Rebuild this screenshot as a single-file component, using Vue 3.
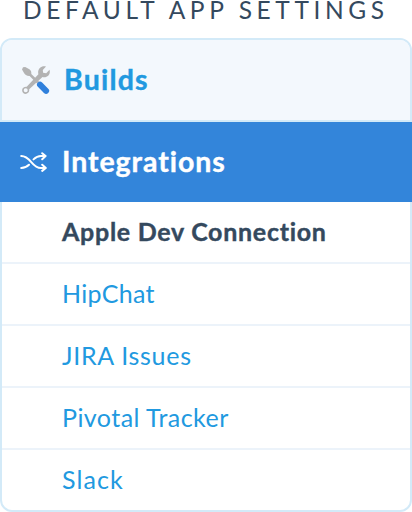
<script setup>
const items = [
  { label: 'Apple Dev Connection', name: 'apple', active: true },
  { label: 'HipChat', name: 'hipchat' },
  { label: 'JIRA Issues', name: 'jira' },
  { label: 'Pivotal Tracker', name: 'pivotal' },
  { label: 'Slack', name: 'slack' },
]
</script>

<template>
  <main class="settings">
    <h1 class="title">DEFAULT APP SETTINGS</h1>
    <nav class="card">
      <a class="section builds">
        <svg class="tools" viewBox="0 0 28 28" width="28" height="28">
          <path class="metal" d="M1 1.2 L3.2 1 L7.4 3.2 C9 4.4 9.6 6 9.3 8 L17 15.5 L15 17.5 L7.6 10 C5 10.2 2.8 8.6 1.9 6.7 L0 3.4Z" />
          <path class="metal" fill-rule="evenodd" d="M24 .6 L20.8 4 L21.1 6.8 L24.2 7.2 L27.5 3.8 C29 8.2 25.3 12.4 20.5 11.1 L7.2 23.2 C8.1 29.2 0 29.4 .1 24.2 C.1 22 2.2 20.5 4.7 20.8 L16.4 8.2 C15 3.3 19.3-.8 24 .6Z M3.7 22.2 a2 2 0 1 0 0 4 a2 2 0 1 0 0-4Z" />
          <path class="handle" d="M18 18.7 L24.1 24.8" />
        </svg>
        <span class="label">Builds</span>
      </a>
      <a class="section integrations">
        <svg class="shuffle" viewBox="0 0 28 20" width="28" height="20">
          <path d="M1.2 4 C11 4 11.5 16 21 16 H25" />
          <path d="M1.2 16 C4.8 16 7 14.8 9 12.8 M13.5 7.4 C16 5 18.5 4 21 4 H25" />
          <path d="M22.2 1.2 L25.6 4 L22.2 7.2 M22.2 12.7 L25.8 16 L22.2 18.9" />
        </svg>
        <span class="label">Integrations</span>
      </a>
      <ul class="list">
        <li v-for="item in items" :key="item.name" class="item" :class="[item.name, { active: item.active }]">
          <span>{{ item.label }}</span>
        </li>
      </ul>
    </nav>
  </main>
</template>

<style>
body {
  background: #fff;
}
</style>

<style scoped>
.settings {
  width: 412px;
  height: 512px;
  font-family: Lato, sans-serif;
  font-variant-ligatures: none;
}
.title {
  height: 38px;
  margin: 0;
  padding-left: 23px;
  box-sizing: border-box;
  font-size: 24.5px;
  font-weight: 400;
  line-height: 19px;
  letter-spacing: 4.6px;
  color: #34495e;
  white-space: nowrap;
}
.card {
  height: 474px;
  box-sizing: border-box;
  border: 2px solid #d3eaf8;
  border-radius: 12px;
}
.section {
  display: flex;
  align-items: center;
  height: 80px;
  font-size: 28.5px;
  font-weight: 700;
}
.label {
  padding-bottom: 2px;
  -webkit-text-stroke: 0.4px currentColor;
}
.builds {
  padding-left: 20px;
  gap: 14px;
  letter-spacing: 1.2px;
  color: #2199e0;
  background: #f3f8fd;
  border-bottom: 2px solid #d3eaf8;
  border-radius: 10px 10px 0 0;
}
.integrations {
  margin: 0 -2px;
  padding-left: 20px;
  gap: 14px;
  letter-spacing: 0.95px;
  color: #fff;
  background: #3385da;
}
.tools .metal {
  fill: #b3b3b3;
}
.tools .handle {
  fill: none;
  stroke: #2f80dc;
  stroke-width: 6;
  stroke-linecap: round;
}
.shuffle {
  fill: none;
  stroke: #fff;
  stroke-width: 2;
  stroke-linecap: round;
  stroke-linejoin: round;
}
.list {
  margin: 0;
  padding: 0;
  list-style: none;
}
.item {
  display: flex;
  align-items: center;
  height: 60px;
  padding: 0 0 3px 60px;
  box-sizing: border-box;
  font-size: 25px;
  color: #2199e0;
}
.item + .item {
  height: 62px;
  border-top: 2px solid #ecf3fa;
}
.active {
  font-weight: 700;
  letter-spacing: 0.72px;
  color: #34495e;
  -webkit-text-stroke: 0.4px currentColor;
}
.hipchat {
  letter-spacing: 0.3px;
}
.jira {
  letter-spacing: 0.7px;
}
.pivotal {
  letter-spacing: 0.45px;
}
.slack {
  letter-spacing: 1.1px;
}
</style>
